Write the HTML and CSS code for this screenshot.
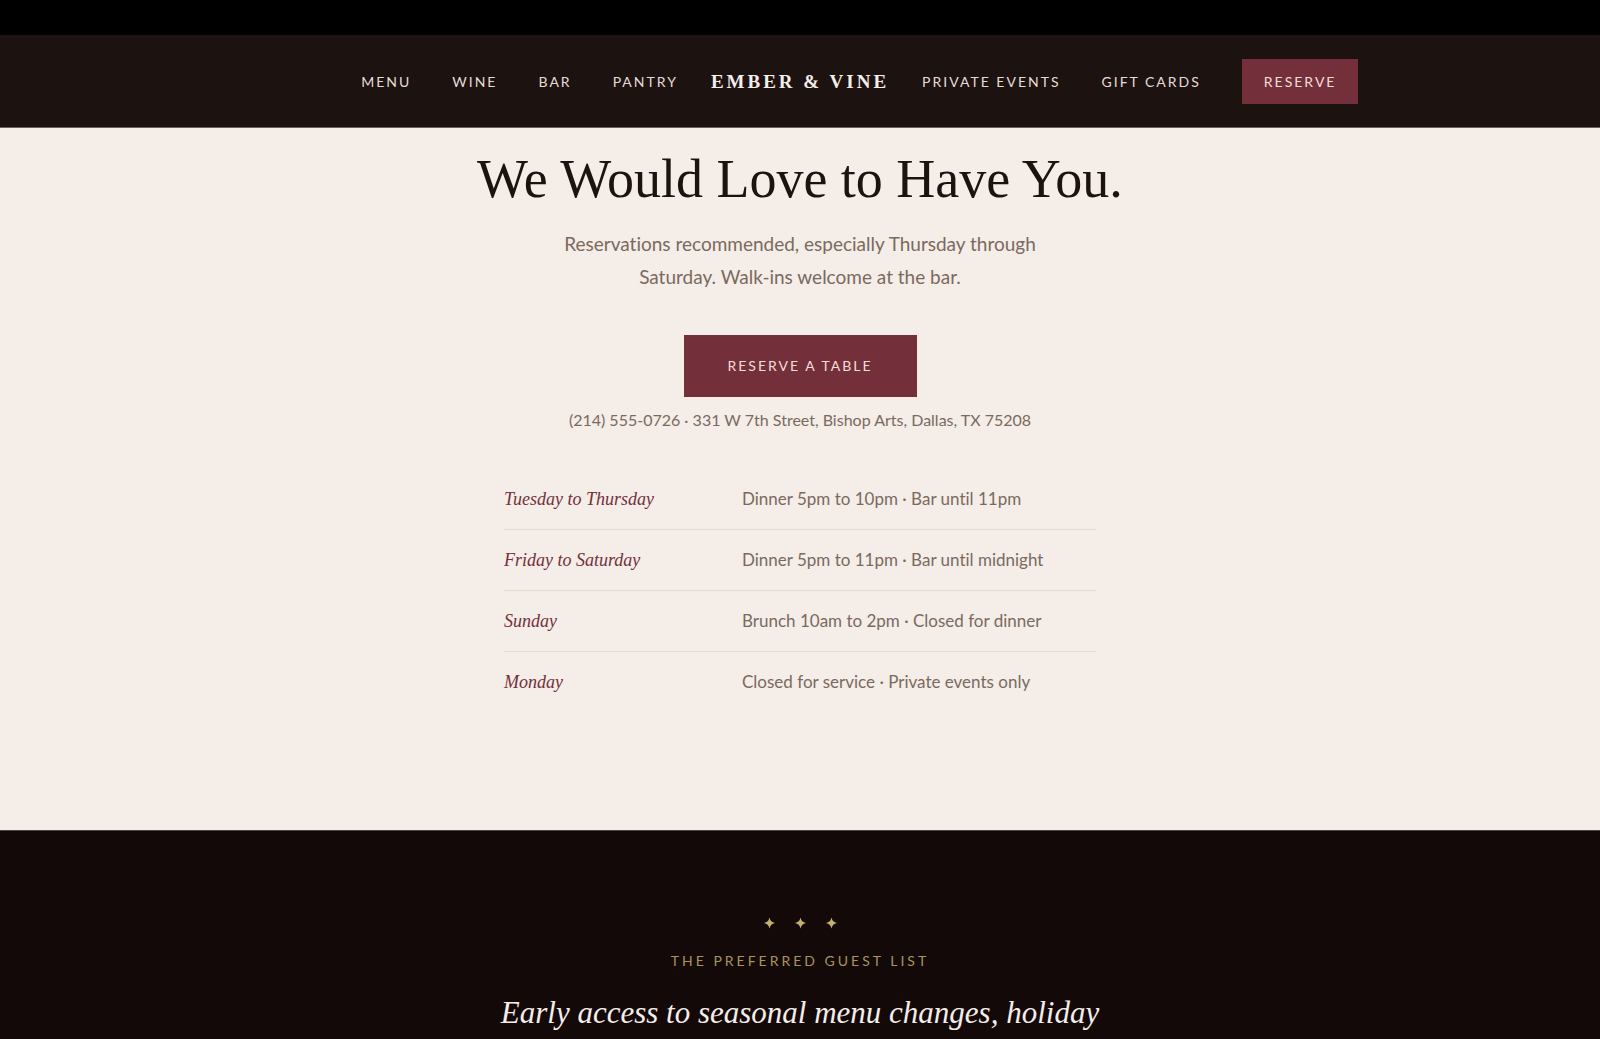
FILE: index.html
```html
<!DOCTYPE html>
<html lang="en">

<head>
    <meta charset="UTF-8">
    <meta name="viewport" content="width=device-width, initial-scale=1.0">
    <title>Ember & Vine</title>
    <link rel="stylesheet" href="styles.css">
</head>

<body>
    <div class="topbar"></div>
    <header class="header">
        <nav class="nav nav-left">
            <a href="#menu">Menu</a>
            <a href="#wine">Wine</a>
            <a href="#bar">Bar</a>
            <a href="#pantry">Pantry</a>
        </nav>
        <a class="logo" href="#home">EMBER &amp; VINE</a>
        <nav class="nav">
            <a href="#events">Private Events</a>
            <a href="#gift">Gift Cards</a>
            <button class="btn btn-small">Reserve</button>
        </nav>
    </header>

    <main>
        <section class="visit">
            <h1>We Would Love to Have You.</h1>
            <p class="intro">Reservations recommended, especially Thursday through Saturday. Walk-ins welcome at the bar.</p>
            <button class="btn btn-large">Reserve a Table</button>
            <p class="contact">(214) 555-0726 · 331 W 7th Street, Bishop Arts, Dallas, TX 75208</p>
            <table class="hours">
                <tr>
                    <th scope="row">Tuesday to Thursday</th>
                    <td>Dinner 5pm to 10pm · Bar until 11pm</td>
                </tr>
                <tr>
                    <th scope="row">Friday to Saturday</th>
                    <td>Dinner 5pm to 11pm · Bar until midnight</td>
                </tr>
                <tr>
                    <th scope="row">Sunday</th>
                    <td>Brunch 10am to 2pm · Closed for dinner</td>
                </tr>
                <tr>
                    <th scope="row">Monday</th>
                    <td>Closed for service · Private events only</td>
                </tr>
            </table>
        </section>

        <section class="guest">
            <div class="stars">
                <svg viewBox="0 0 12 12"><path d="M6 0 Q7 5 12 6 Q7 7 6 12 Q5 7 0 6 Q5 5 6 0Z" /></svg>
                <svg viewBox="0 0 12 12"><path d="M6 0 Q7 5 12 6 Q7 7 6 12 Q5 7 0 6 Q5 5 6 0Z" /></svg>
                <svg viewBox="0 0 12 12"><path d="M6 0 Q7 5 12 6 Q7 7 6 12 Q5 7 0 6 Q5 5 6 0Z" /></svg>
            </div>
            <p class="eyebrow">The Preferred Guest List</p>
            <h2>Early access to seasonal menu changes, holiday</h2>
        </section>
    </main>
</body>

</html>
```
FILE: styles.css
```css
* {
    box-sizing: border-box;
}

body {
    margin: 0;
    background: #130908;
    color: #1c1210;
    font-family: Lato, "Open Sans", sans-serif;
    font-variant-ligatures: none;
}

.topbar {
    height: 35px;
    background: #000;
}

.header {
    display: grid;
    grid-template-columns: 1fr auto 1fr;
    align-items: center;
    gap: 33px;
    padding: 24px 40px 23px;
    background: #1c1210;
    border-bottom: 1px solid #6b605c;
}

.nav {
    display: flex;
    align-items: center;
    gap: 41px;
}

.nav-left {
    justify-content: flex-end;
}

.nav a {
    color: #e6dcd7;
    font-size: 14px;
    letter-spacing: 2px;
    text-decoration: none;
    text-transform: uppercase;
    white-space: nowrap;
}

.logo {
    color: #f5ede8;
    font-family: "Liberation Serif", serif;
    font-size: 19px;
    font-weight: bold;
    letter-spacing: 3px;
    text-decoration: none;
}

.btn {
    background: #73303a;
    border: none;
    color: #f5ddd8;
    cursor: pointer;
    font-family: inherit;
    font-size: 14px;
    letter-spacing: 2px;
    text-transform: uppercase;
}

.btn-small {
    line-height: 17px;
    padding: 14px 22px;
}

.btn-large {
    line-height: 18px;
    padding: 22px 44px;
}

.btn:hover {
    background: #84404a;
}

.visit {
    display: flex;
    flex-direction: column;
    align-items: center;
    padding: 19px 24px 118px;
    background: #f5ede8;
    text-align: center;
}

.visit h1 {
    margin: 0 0 16px;
    font-family: "Liberation Serif", serif;
    font-size: 54px;
    font-weight: normal;
    line-height: 64px;
}

.intro {
    max-width: 490px;
    margin: 0 0 42px;
    color: #7a6a5e;
    font-size: 19px;
    line-height: 33px;
}

.contact {
    margin: 10px 0 36px;
    color: #7a6a5e;
    font-size: 16px;
    line-height: 26px;
}

.hours {
    width: 100%;
    max-width: 592px;
    border-collapse: collapse;
    text-align: left;
}

.hours th,
.hours td {
    padding: 17px 0;
    font-size: 17px;
    line-height: 26px;
}

.hours th {
    width: 238px;
    color: #73303a;
    font-family: "Liberation Serif", serif;
    font-size: 18px;
    font-style: italic;
    font-weight: normal;
}

.hours td {
    color: #7a6a5e;
}

.hours tr + tr {
    border-top: 1px solid #e4d9d5;
}

.guest {
    padding: 86px 24px;
    border-top: 1px solid #4a403c;
    color: #f5ede8;
    text-align: center;
}

.stars {
    display: flex;
    justify-content: center;
    gap: 20px;
}

.stars svg {
    width: 11px;
    height: 12px;
    fill: #c4b070;
}

.eyebrow {
    margin: 22px 0 20px;
    color: #a8955a;
    font-size: 14px;
    letter-spacing: 3px;
    line-height: 20px;
    text-transform: uppercase;
}

.guest h2 {
    max-width: 640px;
    margin: 0 auto;
    font-family: "Liberation Serif", serif;
    font-size: 31px;
    font-style: italic;
    font-weight: normal;
    line-height: 44px;
}
```
